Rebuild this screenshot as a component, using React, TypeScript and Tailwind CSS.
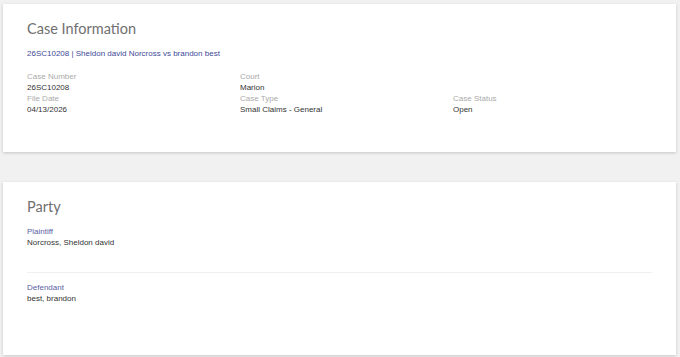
export default function App() {
  return (
    <div className="min-h-screen bg-[#f1f1f1] pt-[4px] pl-[3px] pr-[4px] font-['Liberation_Sans',Arial,sans-serif]">
      {/* Case Information */}
      <section className="bg-white shadow-[0_1px_3px_rgba(0,0,0,0.18)] px-[24px] pt-[15px] pb-[36px]">
        <h2 className="text-[14.5px] leading-[20px] text-[#707070] font-['Lato',sans-serif]">Case Information</h2>
        <p className="mt-[10px] text-[8px] leading-[10px] text-[#3e4a96]">
          26SC10208 | Sheldon david Norcross vs brandon best
        </p>

        <div className="mt-[13px] grid grid-cols-[213px_213px_1fr]">
          <Field label="Case Number" value="26SC10208" />
          <Field label="Court" value="Marion" />
          <div />
          <Field label="File Date" value="04/13/2026" />
          <Field label="Case Type" value="Small Claims - General" />
          <Field label="Case Status" value="Open" />
        </div>
      </section>

      {/* Party */}
      <section className="mt-[30px] bg-white shadow-[0_1px_3px_rgba(0,0,0,0.18)] px-[24px] pt-[15px] pb-[50px]">
        <h2 className="text-[14.5px] leading-[20px] text-[#707070] font-['Lato',sans-serif]">Party</h2>

        <div className="mt-[10px] pb-[23px] border-b border-[#f0f0f0]">
          <div className="text-[8px] leading-[10px] text-[#5a62a6]">Plaintiff</div>
          <div className="text-[8px] leading-[12px] text-[#333]">Norcross, Sheldon david</div>
        </div>

        <div className="pt-[10px]">
          <div className="text-[8px] leading-[10px] text-[#5a62a6]">Defendant</div>
          <div className="text-[8px] leading-[12px] text-[#333]">best, brandon</div>
        </div>
      </section>
    </div>
  );
}

function Field({ label, value }: { label: string; value: string }) {
  return (
    <div>
      <div className="text-[8px] leading-[10px] text-[#aaa]">{label}</div>
      <div className="text-[8px] leading-[12px] text-[#333]">{value}</div>
    </div>
  );
}
